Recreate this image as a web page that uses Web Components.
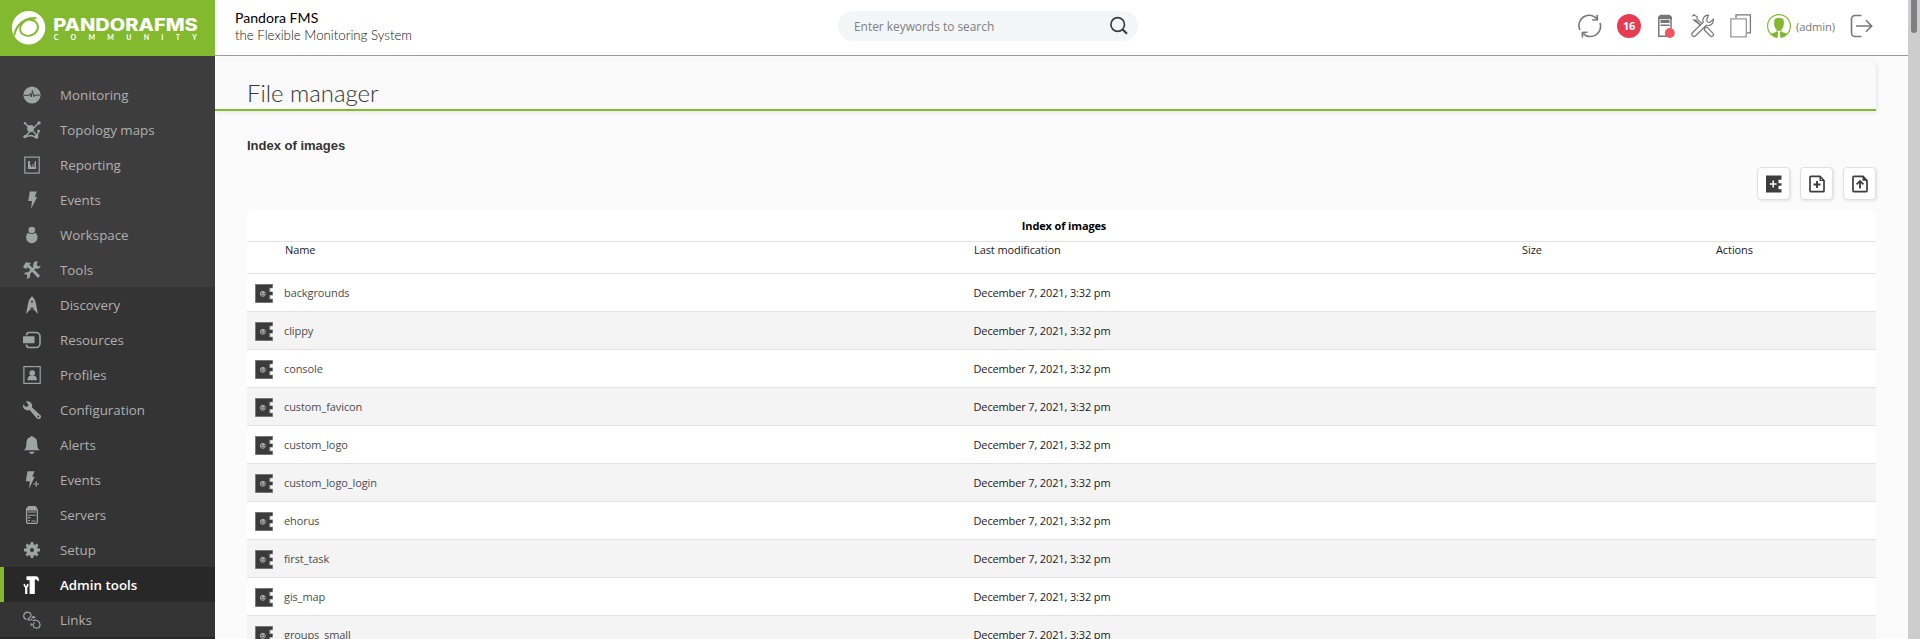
<!DOCTYPE html>
<html lang="en">
<head>
<meta charset="utf-8">
<title>File manager</title>
<style>
html,body{margin:0;height:100%;overflow:hidden;background:#fbfbfb;font-family:"Open Sans",sans-serif}
</style>
</head>
<body>
<pf-app></pf-app>
<script>
const svg = (w, h, body, vb) => `<svg width="${w}" height="${h}" viewBox="${vb || `0 0 ${w} ${h}`}" fill="none" style="display:block">${body}</svg>`;
const F = 'fill="currentColor"', S = 'stroke="currentColor"';
const ICONS = {
  monitoring: svg(18,18,`<circle cx="9" cy="9" r="8.6" ${F}/><path d="M1 9.3h5l1.2-1.6L8.3 11 9.4 4.6l1.5 6 1-1.5h5" stroke="#3d3d3d" stroke-width="1"/>`),
  topology: svg(18,18,`<circle cx="7.5" cy="7.5" r="3.4" ${F}/><path d="M2 2.2l12 12M16 1.8L2 15.5M2 15.5l6.5-1 5 2M13.7 16l2-5.500" ${S} stroke-width="1.4"/><circle cx="2" cy="2.3" r="1.2" ${F}/><circle cx="16" cy="1.9" r="1.7" ${F}/><circle cx="2" cy="15.6" r="1.7" ${F}/><circle cx="13.5" cy="15.8" r="2" ${F}/><circle cx="15.6" cy="10" r="1.5" ${F}/>`),
  reporting: svg(18,18,`<rect x="1.8" y="1.1" width="14.400" height="16" ${S} stroke-width="1.2"/><path d="M5 5h2v4h1v2h1.500V8h1v3h1V5.500h1.500V13H5z" ${F}/>`),
  bolt: svg(18,18,`<path d="M6.800 0.500h7l-2 5.500h2.400L8 18l1-8H5.200z" ${F}/>`),
  workspace: svg(18,18,`<circle cx="8.800" cy="4" r="3.300" ${F}/><path d="M5.200 6.800c2 1.700 5.200 1.700 7.200 0 1.400 1.100 2.100 2.700 2.100 4.400a5.700 6 0 0 1-11.400 0c0-1.700.7-3.300 2.100-4.400z" ${F}/>`),
  tools: svg(18,18,`<path d="M2.800 1.200L8 2l-1.600 1.800L17 14.800 15 17 4.800 6.200 3 8 0 6z" ${F}/><path d="M13 5L4.600 13.600" ${S} stroke-width="2.500"/><path d="M14.800.4a3.700 3.700 0 1 0 2.800 4.200l-2.300.8-1.700-1.600zM3.500 17.800A3.300 3.300 0 1 0 .8 13.400l2.200-.3 1.500 1.800z" ${F}/>`),
  discovery: svg(18,18,`<path fill-rule="evenodd" d="M9 .3C11 2 12.600 4.500 13 8l2 10-4.300-4.500H7.300L3 18l2-10C5.400 4.500 7 2 9 .3zM9 4.800a1 1 0 1 0 0 2 1 1 0 0 0 0-2z" ${F}/><path d="M7 13.500h4L9 11z" fill="#343434"/>`),
  resources: svg(18,18,`<rect x="0" y="5.300" width="11.500" height="7" rx=".6" ${F}/><path d="M3.500 4.300V4A2.600 2.600 0 0 1 6 1.500h7A4 4 0 0 1 17 5.500v7a4 4 0 0 1-4 4H6A2.600 2.600 0 0 1 3.500 14v-.6" ${S} stroke-width="1.600"/>`),
  profiles: svg(18,18,`<rect x=".9" y=".6" width="16.300" height="16.800" ${S} stroke-width="1.200"/><circle cx="9.200" cy="7" r="2.800" ${F}/><path d="M4.500 14.300c0-3 1-4.300 3-4.800h3.400c2 .5 3 1.800 3 4.800z" ${F}/>`),
  wrench: svg(18,18,`<path fill-rule="evenodd" d="M2.800.5A4.700 4.700 0 0 1 8.900 6.300l8.300 7.600a2.400 2.400 0 0 1-3.300 3.500L6.600 9A4.700 4.700 0 0 1 .1 3.600l3 2.300L5 5.300 5.400 3.500zM7.600 7.400l6.600 7.300M15.300 14.600a.9.9 0 1 0 .1 1.800.9.9 0 0 0-.1-1.800z" ${F}/>`),
  bell: svg(18,18,`<path d="M8.800 0c.7 0 1.100.5 1.200 1.100 2.800.6 4.200 2.900 4.200 5.900 0 3.500.3 5.500 2.600 7.300H.8C3.100 12.500 3.400 10.500 3.400 7c0-3 1.400-5.300 4.200-5.900C7.700.5 8.100 0 8.800 0zM6 15.800h5.600c-.5 1.400-1.500 2.100-2.800 2.100S6.500 17.200 6 15.800z" ${F}/>`),
  boltplus: svg(18,18,`<path d="M4.500.3h7L9.300 5.800h2.400L6.200 17.500l.6-7.300H2.800z" ${F}/><path d="M13.200 10.200v5.600M10.400 13h5.600" ${S} stroke-width="1.200"/>`),
  servers: svg(18,18,`<path d="M3.600 4v11.500q0 2 1.500 2h7.800q1.500 0 1.500-2V4" ${S} stroke-width="1.300"/><path d="M5.500 0h7l2 2.500v2H3v-2zM5 5.500h8v1H5zM5 8.800h8v1H5zM5 11h2.500v1.200H5zM5 14h2v1H5zM8.500 14.500h4v1h-4z" ${F}/>`),
  gear: svg(18,18,`<path d="M9 1v16M1 9h16M3.400 3.400l11.200 11.200M14.600 3.400L3.400 14.600" ${S} stroke-width="2.800"/><circle cx="9" cy="9" r="4.200" ${S} stroke-width="3.500"/><circle cx="9" cy="9" r="2" fill="#343434"/>`),
  hammer: svg(18,18,`<path d="M3.500.3H13c2.400.2 3 1.700 2.900 5L14.400 5c0-1-.6-1.400-2.600-1.400V18H6.600V4.200L3.500 4z" ${F}/><path d="M.8 7.500l1.500 1 .2 1.500 1-.1.2-1.500L5.100 7.600c.8 1.800.6 3-.8 3.800V18H2.100v-6.600C.8 10.600.2 9 .8 7.500z" ${F}/>`),
  links: svg(18,18,`<path d="M3.300 8.400a3.700 3.700 0 1 1 4.800-4c0 1.100-.9 1.900-2.600 3.200-1.500 1.200 0 2 2.500 1.200l1.200-.4M12.500 6.300c-2-.4-3 .2-3.300.4M9.600 9.800c3.500-1.600 7.400.4 7.400 3.800a3.400 3.400 0 0 1-6.800.4c-.2-1.600.5-2 1.500-2.600" ${S} stroke-width="1.200"/><path d="M8.300 6.200L11 4.600v3.200zM10.200 13.600l-2.600-1.700v3.400z" ${F}/>`),
  search: svg(20,20,`<circle cx="8.700" cy="8.500" r="6.800" stroke="#3d3d3d" stroke-width="1.700"/><path d="M13.400 13.200l4.600 4.600" stroke="#3d3d3d" stroke-width="2.200"/>`),
  refresh: svg(24,24,`<path d="M2 16A10.200 10.200 0 0 1 18.700 4.600M22 9A10.200 10.200 0 0 1 5.400 19.800M19.200.8l.2 4.900-5.200.3M4.500 23.500l-.2-4.900 5.200-.4" ${S} stroke-width="1.600"/>`),
  server2: svg(20,25,`<path d="M1.800 4v18.200h9M14 5v9.500" ${S} stroke-width="1.500"/><path d="M3.200.8h9.400L15 3v2.200H1V3zM3.500 6h9v3h-9zM3.500 10.600h9v1.300h-9z" ${F}/><circle cx="12.800" cy="19" r="5" fill="#ef5460"/>`),
  toolcross: svg(24,24,`<path d="M1.300 2.300l1.500-1.500 3.300 2v2l5.300 5.300M10 11.600L4.800 6.200h-2z" ${S} stroke-width="1.200"/><path d="M17.500 1.200a5.200 5.200 0 0 0-5.300 6.900L1.500 18.700c-2 2.300.9 5.100 3.100 3L15.300 11.200c4.300 1.300 7.500-2 7-6l-3.500 3.200-2.500-.4-.6-2.700zM13.800 13.800l2.200-.6 6 6.200c1.500 2-.9 4.100-2.700 2.600L13.300 16z" ${S} stroke-width="1.200"/>`),
  copy: svg(22,24,`<path d="M6 4V.8h14.400v18H17" ${S} stroke-width="1.300"/><path d="M.8 4.800h15.500v18H.8z" stroke="#999" stroke-width="1.300"/>`),
  user: svg(24,24,`<circle cx="12" cy="12" r="11.400" stroke="#82b92e" stroke-width="1.200"/><path d="M7.500 5.500C9 3.600 15 3.600 16.500 5.500c.8 3.500.5 8-2 10v2.300l6 2.200a11.300 11.300 0 0 1-17 0l6-2.200v-2.300c-2.500-2-2.800-6.500-2-10z" fill="#82b92e"/><path d="M10 17.300l2-.8 2 .8-1.200 1.200.6 5.500h-2.800l.6-5.500z" fill="#fff"/>`),
  exit: svg(24,24,`<path d="M11.500 1.500H5a3.500 3.500 0 0 0-3.500 3.500v14A3.500 3.500 0 0 0 5 22.500h6.500M6 12h15.500M16 6.300L21.700 12 16 17.700" ${S} stroke-width="1.600"/>`),
  folder: svg(18,19,`<path d="M0 0h18v4.300h-2.700v3.300H18v3.800h-2.700v3.300H18V19H0z" fill="#8a8a8a"/><path d="M.8.800h16.400v3h-3v4.300h3v2.800h-3v4.300h3v3H.8z" fill="#3b3b3b"/><circle cx="7.800" cy="9.800" r="2.500" stroke="#bbb" stroke-width=".9"/><path d="M7 8.500h1.700v2.200H7z" stroke="#ddd" stroke-width=".7"/>`),
  addfolder: svg(18,18,`<path d="M1 .5h15.500v4.300h-3v3.400h3v2.600h-3v3.400h3V17.500H1z" fill="#3d3d3d"/><path d="M8.200 5.600v6.800M4.800 9h6.800" stroke="#fff" stroke-width="1.500"/>`),
  addfile: svg(18,18,`<path d="M12 1.300H3Q2 1.300 2 2.300v13.400q0 1 1 1h12q1 0 1-1V5.500z" stroke="#3d3d3d" stroke-width="1.700"/><path d="M11.500 1l5 5h-5z" fill="#3d3d3d"/><circle cx="13.500" cy="4.200" r=".7" fill="#ddd"/><path d="M9 6v7M5.500 9.500h7" stroke="#3d3d3d" stroke-width="1.900"/>`),
  upload: svg(18,18,`<path d="M12 1.300H3Q2 1.300 2 2.300v13.400q0 1 1 1h12q1 0 1-1V5.500z" stroke="#3d3d3d" stroke-width="1.700"/><path d="M11.500.8l5 5h-5z" fill="#3d3d3d"/><path d="M9 13.500V6M5.600 9.300L9 5.900l3.400 3.400" stroke="#3d3d3d" stroke-width="1.800"/>`)
};
const define = (tag, render) => customElements.define(tag, class extends HTMLElement {
  constructor(){ super(); this.attachShadow({mode:'open'}); }
  connectedCallback(){ this.shadowRoot.innerHTML = render(this); }
});

define('pf-icon', el => `<style>:host{display:block;flex:none}</style>${ICONS[el.getAttribute('name')]}`);

define('pf-logo', () => `<style>:host{display:block;height:56px;flex:none;background:#82b92e}svg{display:block}text{fill:#fff}</style>
<svg width="215" height="56" viewBox="0 0 215 56">
<circle cx="28.600" cy="27.700" r="16.700" fill="#fff"/>
<path d="M14.200 35.500C16 25 25 16.800 36.500 18.300c-6-.5-14.800 2.200-16.300 9.500-.8 5.500 4.500 9.300 10.500 7.700 6-1.700 9-7.500 6.200-12-1.400-2.300-4.200-3.700-7.400-3.400" fill="none" stroke="#82b92e" stroke-width="1.900"/>
<path d="M15 31c3-7 8-11.500 16-13.200" fill="none" stroke="#82b92e" stroke-width="1.300"/>
<text x="53.300" y="30.700" font-family="Inter" font-weight="800" font-size="17" textLength="144.500" lengthAdjust="spacingAndGlyphs">PANDORAFMS</text>
<text x="53.700" y="39.700" font-family="Lato" font-weight="700" font-size="7" textLength="155" letter-spacing="12">COMMUNITY</text>
</svg>`);

define('pf-menu-item', el => `<style>
:host{display:flex;align-items:center;box-sizing:border-box;height:35px;padding-left:23px;color:#9ca4a6}
:host([active]){background:#282828;border-left:4px solid #82b92e;padding-left:19px;color:#fff}
span{margin-left:19px;padding-top:1px;font-size:13.330px;line-height:20px;color:#b0b0b0;white-space:nowrap}
:host([active]) span{color:#fff;font-weight:600}
</style><pf-icon name="${el.getAttribute('icon')}"></pf-icon><span><slot></slot></span>`);

const item = ([icon, text, active]) => `<pf-menu-item icon="${icon}"${active ? ' active' : ''}>${text}</pf-menu-item>`;
define('pf-sidebar', () => `<style>
:host{display:flex;flex-direction:column;width:215px;flex:none;background:#343434;overflow:hidden}
.op{background:#3d3d3d;padding-top:21px;flex:none}.admin{flex:none}.end{flex:1;background:#282828}
</style><pf-logo></pf-logo>
<div class="op">${[['monitoring','Monitoring'],['topology','Topology maps'],['reporting','Reporting'],['bolt','Events'],['workspace','Workspace'],['tools','Tools']].map(item).join('')}</div>
<div class="admin">${[['discovery','Discovery'],['resources','Resources'],['profiles','Profiles'],['wrench','Configuration'],['bell','Alerts'],['boltplus','Events'],['servers','Servers'],['gear','Setup'],['hammer','Admin tools',1],['links','Links']].map(item).join('')}</div><div class="end"></div>`);

define('pf-header', () => `<style>
:host{display:flex;box-sizing:border-box;height:56px;background:#fff;border-bottom:1px solid #9c9c9c;flex:none;position:relative}
.name{width:603px;padding:9px 0 0 20px;box-sizing:border-box;font:14.100px/17px Lato,sans-serif;color:#000}
.name div+div{font-weight:300;font-size:13.250px;line-height:18px;color:#111}
.search{display:flex;align-items:center;justify-content:space-between;box-sizing:border-box;width:300px;height:30px;margin:11px 0 0 20px;padding:0 9px 0 16px;border-radius:15px;background:#f2f6f7;font-size:11.900px;color:#808080}
.tools{flex:1;display:flex;align-items:center;height:52px;color:#777;padding-left:440px}
.badge{width:24px;height:24px;border-radius:50%;background:#e63c52;color:#fff;font:700 11px/24px "Open Sans",sans-serif;letter-spacing:-.2px;text-align:center;margin-left:15px}
.who{font-size:11.200px;letter-spacing:-.1px;margin-left:5px;width:39px;white-space:nowrap}
</style>
<div class="name"><div>Pandora FMS</div><div>the Flexible Monitoring System</div></div>
<div class="search"><span>Enter keywords to search</span><pf-icon name="search"></pf-icon></div>
<div class="tools">
<pf-icon name="refresh"></pf-icon><div class="badge">16</div>
<pf-icon name="server2" style="margin-left:16px"></pf-icon>
<pf-icon name="toolcross" style="margin-left:14px"></pf-icon>
<pf-icon name="copy" style="margin-left:15px"></pf-icon>
<pf-icon name="user" style="margin-left:15px"></pf-icon><span class="who">(admin)</span>
<pf-icon name="exit" style="margin-left:15px"></pf-icon></div>`);

define('pf-title', () => `<style>
:host{display:block;flex:none;box-sizing:border-box;height:50px;margin:5px 32px 0 0;padding:17px 0 0 32px;background:#fafafa;border-bottom:2px solid #82b92e;border-top-right-radius:7px;box-shadow:1px 1px 4px rgba(0,0,0,.1);font:300 23.900px/29px Lato,sans-serif;color:#343434}
</style><slot></slot>`);

define('pf-button', el => `<style>:host{display:flex;align-items:center;justify-content:center;box-sizing:border-box;width:33px;height:33px;border:1px solid #e0e0e0;border-radius:4px;background:#fff;box-shadow:1px 1px 3px rgba(0,0,0,.1)}</style><pf-icon name="${el.getAttribute('icon')}"></pf-icon>`);

define('pf-file-row', () => `<style>
:host{display:grid;grid-template-columns:37px 689.500px 1fr;align-items:center;box-sizing:border-box;height:38px;padding-top:2px;border-bottom:1px solid #e2e2e2;background:#fff;font-size:11px;color:#1a1a1a}
:host([odd]){background:#f4f4f4}
pf-icon{margin-left:8px}
span{line-height:15px;padding-bottom:2px}
.n{color:#4c4c4c;letter-spacing:-.09px}
.d{letter-spacing:-.14px}
</style><pf-icon name="folder"></pf-icon><span class="n"><slot></slot></span><span class="d">December 7, 2021, 3:32 pm</span>`);

define('pf-file-table', () => `<style>
:host{display:block;background:#fff;border-radius:6px 6px 0 0;overflow:hidden;font-size:11px;color:#1a1a1a}
.cap{height:31px;border-bottom:1px solid #e2e2e2;font-weight:700;letter-spacing:-.14px;text-align:center;line-height:31px;padding-left:5px;color:#000}
.head{display:grid;grid-template-columns:689px 548px 194px 1fr;padding-left:38px;height:31px;border-bottom:1px solid #e2e2e2;line-height:15px;letter-spacing:-.09px}
</style><div class="cap">Index of images</div>
<div class="head"><span>Name</span><span>Last modification</span><span>Size</span><span>Actions</span></div>
${['backgrounds','clippy','console','custom_favicon','custom_logo','custom_logo_login','ehorus','first_task','gis_map','groups_small'].map((n,i)=>`<pf-file-row${i%2?' odd':''}>${n}</pf-file-row>`).join('')}`);

define('pf-scrollbar', () => `<style>:host{display:block;width:12px;flex:none;background:#cdcdcd;overflow:hidden}div{width:6px;height:43px;margin:-10px 0 0 3px;border-radius:3px;background:#7c8080}</style><div></div>`);

define('pf-app', () => `<style>
:host{display:flex;height:639px;overflow:hidden}
main{flex:1;display:flex;flex-direction:column;min-width:0;overflow:hidden}
.body{padding:0 32px;flex:none}
h3{margin:25px 0 0;font:700 13px/20px "Liberation Sans",sans-serif;color:#343434}
.bar{display:flex;justify-content:flex-end;gap:10px;margin:11px 0 10px}
</style><pf-sidebar></pf-sidebar>
<main><pf-header></pf-header><pf-title>File manager</pf-title>
<div class="body"><h3>Index of images</h3>
<div class="bar"><pf-button icon="addfolder"></pf-button><pf-button icon="addfile"></pf-button><pf-button icon="upload"></pf-button></div>
<pf-file-table></pf-file-table></div></main><pf-scrollbar></pf-scrollbar>`);
</script>
</body>
</html>
